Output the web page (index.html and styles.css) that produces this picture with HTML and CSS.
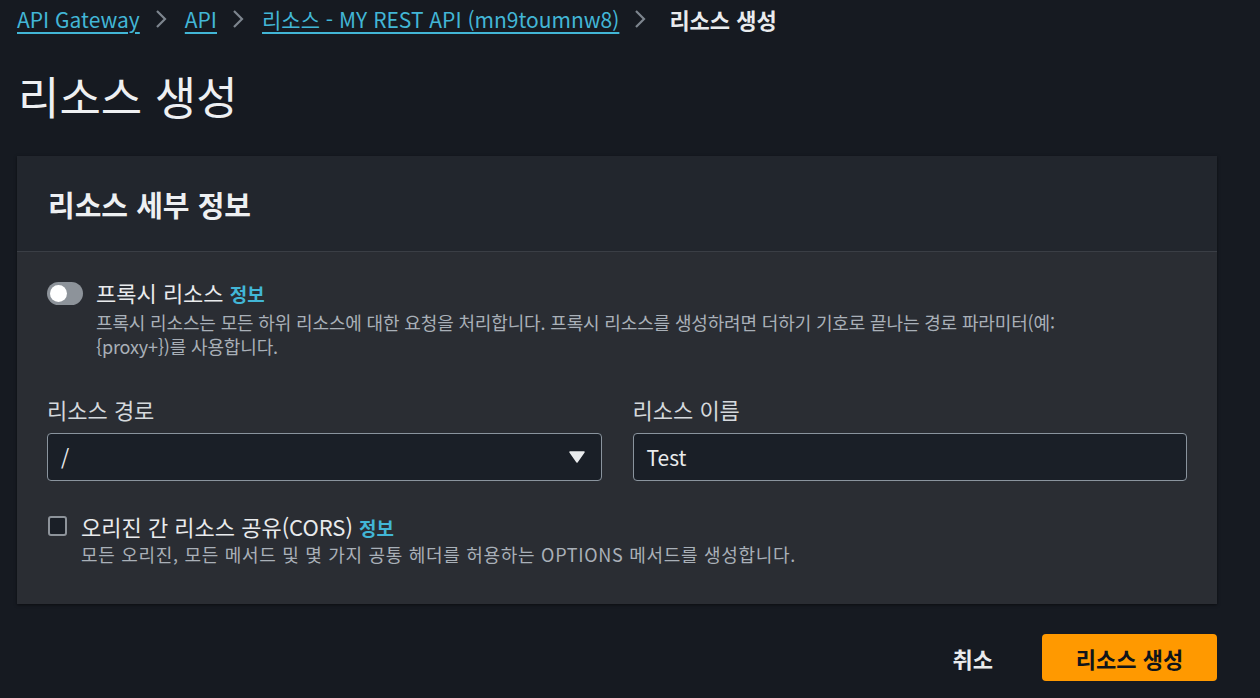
FILE: index.html
```html
<!DOCTYPE html>
<html lang="ko">
<head>
<meta charset="utf-8">
<link rel="stylesheet" href="styles.css">
</head>
<body>
<div class="page">
  <nav class="crumbs">
    <a class="crumb-link">API Gateway</a>
    <svg class="chev" width="14" height="22" viewBox="0 0 14 22"><path d="M3 3 L11 11 L3 19" fill="none" stroke="#7d858e" stroke-width="2.2"/></svg>
    <a class="crumb-link">API</a>
    <svg class="chev" width="14" height="22" viewBox="0 0 14 22"><path d="M3 3 L11 11 L3 19" fill="none" stroke="#7d858e" stroke-width="2.2"/></svg>
    <a class="crumb-link">리소스 - MY REST API (mn9toumnw8)</a>
    <svg class="chev chev-last" width="14" height="22" viewBox="0 0 14 22"><path d="M3 3 L11 11 L3 19" fill="none" stroke="#7d858e" stroke-width="2.2"/></svg>
    <span class="crumb-current">리소스 생성</span>
  </nav>

  <h1 class="title">리소스 생성</h1>

  <section class="card">
    <header class="card-head">
      <h2 class="card-title">리소스 세부 정보</h2>
    </header>
    <div class="card-body">
      <div class="option">
        <span class="toggle"><span class="knob"></span></span>
        <div class="option-text">
          <div class="option-label">프록시 리소스 <span class="info">정보</span></div>
          <div class="option-desc">프록시 리소스는 모든 하위 리소스에 대한 요청을 처리합니다. 프록시 리소스를 생성하려면 더하기 기호로 끝나는 경로 파라미터(예:<br>{proxy+})를 사용합니다.</div>
        </div>
      </div>

      <div class="fields">
        <div class="field">
          <label class="field-label">리소스 경로</label>
          <div class="input select">
            <span>/</span>
            <svg width="16" height="12" viewBox="0 0 16 12"><path d="M1 1 H15 L8 11 Z" fill="#e9ebed" stroke="#e9ebed" stroke-width="1.5" stroke-linejoin="round"/></svg>
          </div>
        </div>
        <div class="field">
          <label class="field-label">리소스 이름</label>
          <div class="input"><span>Test</span></div>
        </div>
      </div>

      <div class="option cors">
        <span class="checkbox"></span>
        <div class="option-text">
          <div class="option-label">오리진 간 리소스 공유(CORS) <span class="info">정보</span></div>
          <div class="option-desc cors-desc">모든 오리진, 모든 메서드 및 몇 가지 공통 헤더를 허용하는 OPTIONS 메서드를 생성합니다.</div>
        </div>
      </div>
    </div>
  </section>

  <div class="actions">
    <button class="btn-cancel">취소</button>
    <button class="btn-primary">리소스 생성</button>
  </div>
</div>
</body>
</html>
```

FILE: styles.css
```css
* { box-sizing: border-box; }
html, body { margin: 0; padding: 0; }
body {
  background: #161a21;
  color: #e9ebed;
  font-family: "Noto Sans CJK KR", "Noto Sans", sans-serif;
  width: 1260px;
  height: 698px;
  overflow: hidden;
}
.page {
  padding: 0 43px 0 17px;
}
.crumbs {
  display: flex;
  align-items: center;
  height: 38px;
  font-size: 21px;
}
.crumb-link {
  color: #42b6d6;
  text-decoration: underline;
  text-underline-offset: 4px;
  text-decoration-thickness: 2px;
}
.chev { margin: 0 17px 0 14px; flex: none; }
.chev-last { margin-right: 22px; }
.crumb-current { font-weight: 700; color: #e9ebed; font-size: 22px; }
.title {
  margin: 30px 0 0 1px;
  font-size: 45px;
  font-weight: 400;
  line-height: 56px;
  color: #eef0f2;
}
.card {
  margin-top: 32px;
  background: #2a2d33;
  box-shadow: 0 1px 3px rgba(0,0,0,0.5);
}
.card-head {
  background: #22262d;
  height: 96px;
  border-bottom: 1px solid #3a3e45;
  display: flex;
  align-items: center;
  padding-left: 31px;
}
.card-title {
  margin: 0;
  font-size: 29px;
  font-weight: 700;
  color: #eef0f2;
}
.card-body {
  padding: 27px 30px 38px 30px;
}
.option {
  display: flex;
  gap: 13px;
}
.toggle {
  width: 36px;
  height: 23px;
  border-radius: 12px;
  background: #8d939a;
  position: relative;
  flex: none;
  margin-top: 3px;
}
.knob {
  position: absolute;
  left: 3px;
  top: 3px;
  width: 17px;
  height: 17px;
  border-radius: 50%;
  background: #ffffff;
}
.option-label {
  font-size: 22px;
  line-height: 26px;
  color: #e9ebed;
}
.info {
  color: #42b6d6;
  font-weight: 700;
  font-size: 19px;
}
.option-desc {
  font-size: 18px;
  line-height: 24px;
  color: #a9b0b8;
  margin-top: 3px;
  letter-spacing: -0.15px;
}
.cors-desc { letter-spacing: 0.7px; }
.fields {
  display: grid;
  grid-template-columns: 1fr 1fr;
  gap: 31px;
  margin-top: 38px;
}
.field-label {
  display: block;
  font-size: 22px;
  line-height: 26px;
  color: #d5d9dd;
  margin-bottom: 11px;
}
.input {
  height: 48px;
  border: 1px solid #8a949e;
  border-radius: 4px;
  background: #1a1f27;
  display: flex;
  align-items: center;
  justify-content: space-between;
  padding: 0 16px 0 13px;
  font-size: 21px;
  color: #e9ebed;
}
.cors {
  margin-top: 32px;
  gap: 14px;
}
.checkbox {
  width: 19px;
  height: 20px;
  border: 2px solid #8d939a;
  border-radius: 3px;
  background: #1a1f27;
  flex: none;
  margin-left: 1px;
  margin-top: 3px;
}
.cors .option-desc { margin-top: 1px; }
.actions {
  display: flex;
  justify-content: flex-end;
  align-items: center;
  gap: 49px;
  margin-top: 30px;
}
.btn-cancel {
  background: none;
  border: none;
  color: #e9ebed;
  font-family: inherit;
  font-size: 22px;
  font-weight: 700;
  padding: 0;
}
.btn-primary {
  width: 175px;
  height: 47px;
  background: #ff9900;
  border: none;
  border-radius: 4px;
  color: #0f141a;
  font-family: inherit;
  font-size: 22px;
  font-weight: 700;
}
```
